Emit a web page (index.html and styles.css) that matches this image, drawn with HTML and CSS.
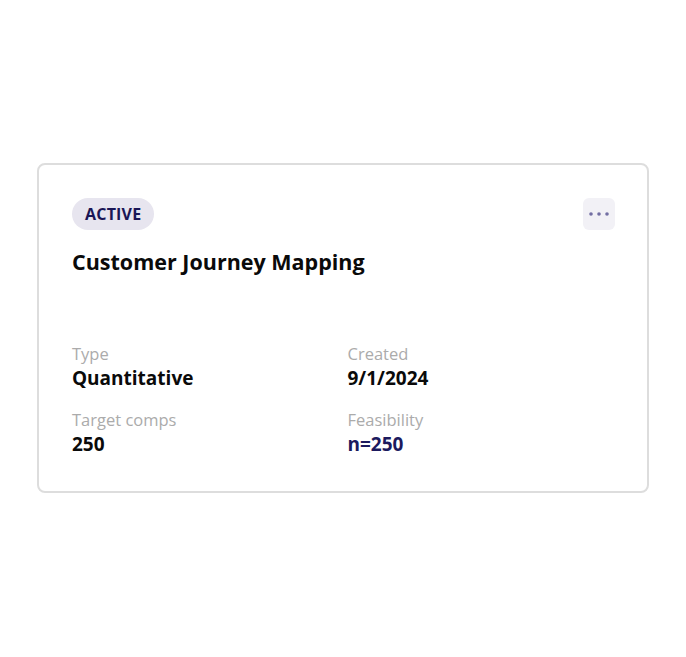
FILE: index.html
```html
<!DOCTYPE html>
<html lang="en">

<head>
    <meta charset="UTF-8">
    <title>Study card</title>
    <meta name="viewport" content="width=device-width, initial-scale=1.0" />
    <link rel="stylesheet" href="styles.css">
</head>

<body>
    <div class="card">
        <div class="card-head">
            <span class="badge">ACTIVE</span>
            <button class="menu-btn" aria-label="More">
                <svg width="20" height="4" viewBox="0 0 20 4">
                    <circle cx="2" cy="2" r="1.8" />
                    <circle cx="10" cy="2" r="1.8" />
                    <circle cx="18" cy="2" r="1.8" />
                </svg>
            </button>
        </div>

        <h2 class="title">Customer Journey Mapping</h2>

        <div class="meta">
            <div class="field">
                <div class="label">Type</div>
                <div class="value">Quantitative</div>
            </div>
            <div class="field">
                <div class="label">Created</div>
                <div class="value">9/1/2024</div>
            </div>
            <div class="field">
                <div class="label">Target comps</div>
                <div class="value">250</div>
            </div>
            <div class="field">
                <div class="label">Feasibility</div>
                <div class="value accent">n=250</div>
            </div>
        </div>
    </div>
</body>

</html>
```

FILE: styles.css
```css
body {
    font-family: "Open Sans", "Noto Sans", sans-serif;
    margin: 0;
    padding-top: 163px;
    background: #fff;
}

.card {
    width: 612px;
    margin: 0 auto;
    box-sizing: border-box;
    border: 2px solid #dddddd;
    border-radius: 8px;
    padding: 33px 32px 34px 33px;
    background: #fff;
}

.card-head {
    display: flex;
    justify-content: space-between;
    align-items: center;
}

.badge {
    display: inline-block;
    height: 32px;
    line-height: 32px;
    padding: 0 13px;
    border-radius: 16px;
    background: #e7e5ef;
    color: #1a1656;
    font-size: 16px;
    font-weight: 700;
    letter-spacing: 0.2px;
}

.menu-btn {
    width: 32px;
    height: 32px;
    border: none;
    border-radius: 6px;
    background: #f2f1f6;
    display: flex;
    align-items: center;
    justify-content: center;
    padding: 0;
    cursor: pointer;
}

.menu-btn svg {
    fill: #736fa3;
}

.title {
    margin: 17px 0 0;
    font-size: 21.5px;
    line-height: 30px;
    font-weight: 700;
    color: #0a0a0a;
}

.meta {
    margin-top: 66px;
    display: grid;
    grid-template-columns: 1fr 1fr;
    column-gap: 8px;
    row-gap: 18px;
}

.label {
    font-size: 16.5px;
    line-height: 22px;
    color: #ababab;
}

.value {
    font-size: 19px;
    line-height: 26px;
    font-weight: 700;
    color: #0a0a0a;
}

.value.accent {
    color: #1c1a5e;
}
```
